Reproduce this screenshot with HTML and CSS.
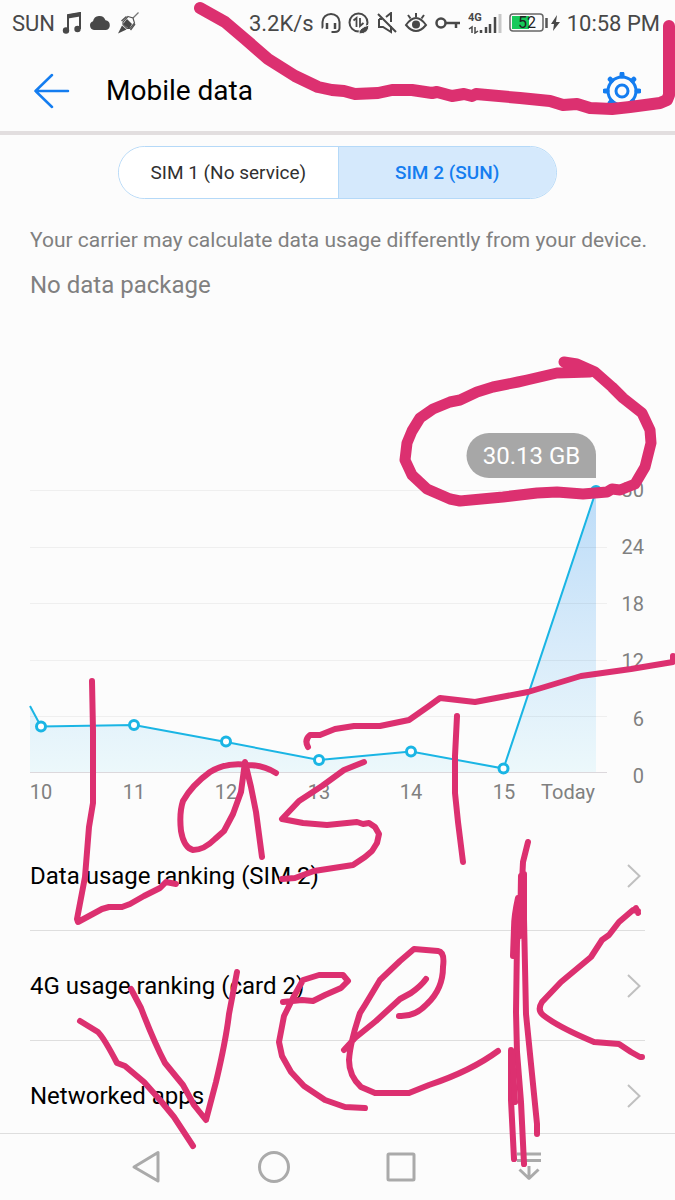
FILE: index.html
```html
<!DOCTYPE html>
<html lang="en">
<head>
<meta charset="utf-8">
<meta name="viewport" content="width=device-width, initial-scale=1">
<title>Mobile data</title>
<link rel="stylesheet" href="styles.css">
</head>
<body>
<div class="screen">
  <div class="status">
    <div class="status-group">
      <span>SUN</span>
      <svg viewBox="0 0 20 22" width="20" height="22"><path d="M6 18V3l12-2v16" fill="none" stroke="#484848" stroke-width="2"/><path d="M6 2.500l12-2v4l-12 2z" fill="#484848"/><circle cx="4" cy="18.500" r="3.200" fill="#484848"/><circle cx="15.500" cy="17" r="3.200" fill="#484848"/></svg>
      <svg viewBox="0 0 22 16" width="22" height="16"><path d="M5 15a4.500 4.500 0 0 1-1-8.700A6.500 6.500 0 0 1 16.500 5.200 5 5 0 0 1 17 15z" fill="#484848"/></svg>
      <svg viewBox="0 0 22 22" width="22" height="22"><path d="M20.500 .5L14 7" stroke="#777" stroke-width="1.200"/><path d="M10 4.500l5 1.500 1.500 5-4.500 5.500H9L5 12.500V10z" fill="#fcfcfc" stroke="#555" stroke-width="1.200"/><path d="M9 7l5 5-3 5-6-5z" fill="#484848"/><path d="M8.500 4.500L3.500 9M17 12l-4.500 6" stroke="#555" stroke-width="1.400"/><path d="M4 13.500l4.500 4L0 21.500z" fill="#484848"/></svg>
    </div>
    <div class="status-group">
      <span>3.2K/s</span>
      <svg viewBox="0 0 20 21" width="20" height="21" fill="none" stroke="#484848" stroke-width="2"><path d="M2 14.500H1.500V9a8.500 8 0 0 1 17 0v6q0 4-5 4h-3"/><path d="M6 10v6M14 10v6" stroke-width="2.500"/></svg>
      <svg viewBox="0 0 22 22" width="22" height="22"><circle cx="10.500" cy="10.500" r="9" fill="none" stroke="#484848" stroke-width="2"/><path d="M5.500 8.500L8.500 6v9M12 6v8l3.500-3" fill="none" stroke="#484848" stroke-width="1.800"/><path d="M11 22q-1-6 10-9 0 9-10 9z" fill="#484848" stroke="#fcfcfc"/></svg>
      <svg viewBox="0 0 20 22" width="20" height="22" fill="none" stroke="#484848" stroke-width="2"><path d="M1 2l18 18M2 7v8h4l8 5v-6M2 7h3M9 5l5-4v9"/></svg>
      <svg viewBox="0 0 24 22" width="24" height="22"><path d="M2 13q10-14 20 0-10 12-20 0z" fill="none" stroke="#484848" stroke-width="2"/><circle cx="12" cy="12.500" r="4" fill="#484848"/><path d="M12 1v4M4 3l2.500 3.500M20 3l-2.500 3.500" stroke="#484848" stroke-width="2"/></svg>
      <svg viewBox="0 0 26 16" width="26" height="16" fill="none" stroke="#484848" stroke-width="2.500"><circle cx="6" cy="8" r="4.500"/><path d="M11 8h14M21 8v5"/></svg>
      <svg viewBox="0 0 34 22" width="34" height="22"><text class="net" x="0" y="9">4G</text><path d="M1 17l3-2v6M7 15v6l3-2" fill="none" stroke="#484848" stroke-width="1.500"/><path d="M13 21v-3M18 21v-6M22 21v-9M27 21V5" stroke="#484848" stroke-width="2.500"/><path d="M32 21V2" stroke="#c8c8c8" stroke-width="3"/></svg>
      <svg viewBox="0 0 51 20" width="51" height="20"><rect x="1" y="1" width="33" height="17" rx="3" fill="#fcfcfc" stroke="#666" stroke-width="1.500"/><rect x="3" y="3" width="17" height="13" fill="#16c95a"/><path d="M37.500 5v10" stroke="#555" stroke-width="2.500"/><path d="M48 2l-6 9h3l-1 7 7-9h-4z" fill="#484848"/><text class="pct" x="9" y="15">52</text></svg>
      <span>10:58 PM</span>
    </div>
  </div>

  <header class="bar">
    <button class="icon-btn" aria-label="Back"><svg viewBox="0 0 36 36" width="36" height="36" fill="none" stroke="#147df0" stroke-width="2.500" stroke-linecap="round" stroke-linejoin="round"><path d="M34 18H1.500M18 2L1.500 18 18 34"/></svg></button>
    <h1>Mobile data</h1>
    <button class="icon-btn" aria-label="Settings"><svg viewBox="-19 -19 38 38" width="38" height="38" fill="none" stroke="#147df0"><circle r="14" stroke-width="3"/><circle r="6" stroke-width="3"/><path d="M0-15v-2M0 15v2M-15 0h-2M15 0h2M-10.600-10.600l-1.200-1.200M10.600-10.600l1.200-1.200M-10.600 10.600l-1.200 1.200M10.600 10.600l1.200 1.200" stroke-width="5" stroke-linecap="round"/></svg></button>
  </header>

  <main>
    <div class="tabs">
      <button class="tab">SIM 1 (No service)</button>
      <button class="tab tab-on">SIM 2 (SUN)</button>
    </div>
    <p class="note">Your carrier may calculate data usage differently from your device.</p>
    <p class="package">No data package</p>

    <svg class="chart" viewBox="0 0 645 390" role="img" aria-label="Daily data usage in GB">
      <defs><linearGradient id="fill" x1="0" y1="70" x2="0" y2="352" gradientUnits="userSpaceOnUse"><stop offset="0" stop-color="#bcdcf8"/><stop offset=".55" stop-color="#d8ebfa"/><stop offset="1" stop-color="#ecf8fb"/></linearGradient></defs>
      <path d="M30 287L41 307l93-2 92 17 93 18 92-8 93 16L596 71v281H30z" fill="url(#fill)"/>
      <path class="grid" d="M30 70.500h577M30 127.500h577M30 183.500h577M30 240.500h577M30 296.500h577"/>
      <path class="axis" d="M30 352.500h577"/>
      <path class="line" d="M30 286L41 306.500l93-1.500 92 17 93 18 92-8.500 92.500 17L596 71"/>
      <g class="dots"><circle cx="41" cy="306.500" r="4.500"/><circle cx="134" cy="305" r="4.500"/><circle cx="226" cy="321.500" r="4.500"/><circle cx="319" cy="340" r="4.500"/><circle cx="411" cy="331.500" r="4.500"/><circle cx="503.500" cy="348.500" r="4.500"/><circle cx="596" cy="71" r="4.500"/></g>
      <path d="M489 13h85a22 22 0 0 1 22 22v23H489a22 22 0 0 1 0-45z" fill="#a7a7a7"/>
      <text class="value" x="531.500" y="44">30.13 GB</text>
      <g class="y"><text x="644" y="77">30</text><text x="644" y="134">24</text><text x="644" y="191">18</text><text x="644" y="248">12</text><text x="644" y="306">6</text><text x="644" y="363">0</text></g>
      <g class="x"><text x="41" y="379">10</text><text x="134" y="379">11</text><text x="226" y="379">12</text><text x="319" y="379">13</text><text x="411" y="379">14</text><text x="504" y="379">15</text><text x="568" y="379">Today</text></g>
    </svg>

    <nav class="list">
      <a class="row" href="#ranking"><span>Data usage ranking (SIM 2)</span><svg viewBox="0 0 14 24" width="14" height="24"><path d="M1 1l11.500 11L1 23"/></svg></a>
      <a class="row" href="#ranking-4g"><span>4G usage ranking (card 2)</span><svg viewBox="0 0 14 24" width="14" height="24"><path d="M1 1l11.500 11L1 23"/></svg></a>
      <a class="row" href="#apps"><span>Networked apps</span><svg viewBox="0 0 14 24" width="14" height="24"><path d="M1 1l11.500 11L1 23"/></svg></a>
    </nav>
  </main>

  <footer class="navbar">
    <button aria-label="Back"><svg viewBox="0 0 32 34" width="32" height="34"><path d="M28 2.500V31L4 17z"/></svg></button>
    <button aria-label="Home"><svg viewBox="0 0 32 34" width="32" height="34"><circle cx="16" cy="17" r="14.500"/></svg></button>
    <button aria-label="Recent apps"><svg viewBox="0 0 32 34" width="32" height="34"><rect x="2" y="4" width="26" height="26" rx="1"/></svg></button>
    <button aria-label="Notifications"><svg viewBox="0 0 32 34" width="32" height="34"><path d="M3 4h24M3 10.500h24M15 16v12M5.500 19.500l9.500 9 9.500-9"/></svg></button>
  </footer>

  <svg class="ink" viewBox="0 0 675 1200" aria-hidden="true">
    <g stroke-width="12">
      <path d="M200 8L225 22 245 39 268 59 295 76 318 87 332 90 344 91 355 94 378 93 392 90 412 90 432 93 437 92 452 96 464 94 472 96 476 94 520 98 550 101 563 105 577 104 590 108 612 109 630 107 660 103 667 100 669 95V26"/>
      <path d="M564 362L577 364 595 372 612 387 623 398 642 413 650 430 651 443 645 467 635 484 620 490 612 489 607 492 583 494 557 492 537 493 503 497 460 501 450 499 427 489 412 475 405 460 407 443 412 431 420 418 433 409 450 402 460 400 477 392 493 387 518 382 527 380 557 373 590 372" stroke-width="11"/>
    </g>
    <g stroke-width="6">
      <path d="M92 681l1 50v72l-4 24-4 50-8 42 1 3 24-13 7-2h13l8-3 14-8 16-8 6-6 10 2"/>
      <path d="M276 773q-13-8-28-8-22-3-38 7-18 13-27 29-4 12-2 30 3 17 12 19 11 0 22-11l9-8 9-17 8-22 4-30 6 25 5 25 6 45"/>
      <path d="M364 762L344 770 322 786 299 801 282 819 303 823 327 825 357 822 363 824 369 823 375 827 379 834 377 843 372 851 365 857 353 865 314 871 295 878 282 879"/>
      <path d="M457 716l-2 40v37l3 29 5 40"/>
      <path d="M308 747q-4-7 2-12h10l15-6 19-3h26l29-6 20-14 11-8 35 4 53-10 53-16 50-7 42-7v-6"/>
      <path d="M80 1021l18 11q6 6 19 31l8 3 19 16 16 18 14 17 19 29"/>
      <path d="M131 989l10 19q13 34 24 55l18 22 11 20 12 15 10-38q10-42 13-68l8-42"/>
      <path d="M283 1002L302 1000 313 1001 325 995 341 988 348 981 343 975 331 975 319 975 303 980 293 998 284 1016 279 1042 282 1056 291 1072 304 1086 325 1100 345 1107 365 1108"/>
      <path d="M344 1050l11-12 21-17 24-22 11-6q10-7 15-14M399 1016q16 1 28-12 16-15 16-37 2-15-5-16l-24-2-14 12-20 19-15 25-5 8q-10 30-11 47 0 16 12 27l14 6h34l20-8q42-14 69-34"/>
      <path d="M528 842l-5 20-2 40-4 40-1 70 1 40 4 50 3 62M524 874v45l2 95 6 60 5 50v10M518 898q-4 18-4 30l-1 28M511 1050v50l3 59"/>
      <path d="M521 876l-1 60M512 1052l3 50"/>
      <path d="M638 911l-5-1-14 12-10 13-7 5-11 17-30 25-19 20q-5 8 1 13 15 12 51 27l25 2 12 8 9 5h2M636 908l2 5"/>
    </g>
  </svg>
</div>
</body>
</html>
```
FILE: styles.css
```css
* { box-sizing: border-box; }
body { margin: 0; background: #fcfcfc; color: #000; font-family: Roboto, "Liberation Sans", sans-serif; }
button { border: 0; background: none; padding: 0; font: inherit; color: inherit; }
h1, p { margin: 0; font-weight: 400; }
svg { display: block; flex: none; }
.screen { position: relative; min-height: 100vh; display: flex; flex-direction: column; overflow: hidden; }
.status { display: flex; justify-content: space-between; align-items: center; height: 46px; padding: 0 15px 0 12px; font-size: 22px; color: #484848; white-space: nowrap; }
.status-group { display: flex; align-items: center; gap: 7px; }
.net { font-size: 11px; font-weight: 700; fill: #484848; }
.pct { font-size: 16px; fill: #222; }
.bar { display: flex; align-items: center; height: 89px; padding: 4px 34px 0; border-bottom: 4px solid #e2dedf; }
.bar h1 { flex: 1; padding-left: 36px; font-size: 28px; }
.tabs { display: grid; grid-template-columns: 1fr 1fr; width: 65%; height: 53px; margin: 11px auto 0; border: 1px solid #b5d9f8; border-radius: 27px; overflow: hidden; font-size: 19px; }
.tab { color: #303030; background: #fff; }
.tab-on { color: #147df0; background: #d5e9fc; border-left: 1px solid #b5d9f8; font-weight: 500; }
.note { padding: 28px 28px 0 30px; font-size: 21px; line-height: 26px; color: #808080; }
.package { padding: 16px 30px 0; font-size: 24px; line-height: 32px; color: #808080; }
.chart { width: 100%; padding-right: 30px; margin-top: 119px; overflow: visible; }
.grid { stroke: #000; stroke-opacity: .05; }
.axis { stroke: #dcd8dc; }
.line { fill: none; stroke: #1ab5e4; stroke-width: 2; }
.dots { fill: #fff; stroke: #1ab5e4; stroke-width: 3; }
.value { fill: #fff; font-size: 24px; text-anchor: middle; }
.y, .x { fill: #808080; font-size: 20px; }
.y { text-anchor: end; }
.x { text-anchor: middle; }
.list { padding: 11px 30px 0; }
.row { display: flex; justify-content: space-between; align-items: center; height: 110px; padding-right: 4px; border-bottom: 1px solid #dedede; font-size: 24px; color: #000; text-decoration: none; }
.row:last-child { height: 91px; border: 0; padding-top: 18px; }
.row path { fill: none; stroke: #c0c0c0; stroke-width: 2; }
.navbar { display: flex; justify-content: center; gap: 96px; height: 67px; margin-top: auto; border-top: 1px solid #dedede; }
.navbar svg { fill: none; stroke: #aaa; stroke-width: 3; stroke-linejoin: round; }
.ink { position: absolute; inset: 0; width: 100%; pointer-events: none; fill: none; stroke: #dc3070; stroke-linecap: round; stroke-linejoin: round; }
```
